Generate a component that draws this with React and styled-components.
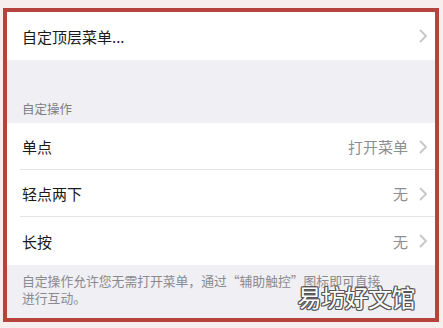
import React from "react";
import styled, { createGlobalStyle } from "styled-components";

const Global = createGlobalStyle`
  html, body { margin: 0; padding: 0; }
  body {
    background: #f7eeee;
    font-family: "Noto Sans CJK SC", "Noto Sans", sans-serif;
  }
`;

const Page = styled.div`
  width: 443px;
  height: 328px;
  box-sizing: border-box;
  padding: 8px 4px 6px 3px;
  display: flex;
`;

const Frame = styled.div`
  position: relative;
  flex: 1;
  border: 4px solid #b7433d;
  background: #efeff4;
  display: flex;
  flex-direction: column;
  overflow: hidden;
`;

const Group = styled.div`
  background: #fff;
  display: flex;
  flex-direction: column;
`;

const Row = styled.div`
  height: ${(p) => p.$h || 47}px;
  display: flex;
  align-items: center;
  padding: 0 7px 0 15px;
  position: relative;
  &::after {
    content: "";
    display: ${(p) => (p.$sep ? "block" : "none")};
    position: absolute;
    left: 13px;
    right: 0;
    bottom: 0;
    height: 1px;
    background: #e3e3e8;
  }
`;

const Label = styled.span`
  flex: 1;
  font-size: 15px;
  color: #1a1a1a;
`;

const Value = styled.span`
  font-size: 15px;
  color: #8e8e93;
  margin-right: 11px;
`;

const SectionHeader = styled.div`
  height: 63px;
  box-sizing: border-box;
  display: flex;
  align-items: flex-end;
  padding: 0 15px 6px;
  font-size: 12.5px;
  line-height: 17px;
  color: #7d7d82;
`;

const Footer = styled.div`
  padding: 7px 15px 0;
  display: flex;
  flex-direction: column;
`;

const FooterLine = styled.span`
  display: block;
  font-size: 12.8px;
  line-height: 17px;
  height: 17px;
  color: #8a8a8f;
  white-space: nowrap;
`;

const Watermark = styled.div`
  position: absolute;
  right: 20px;
  bottom: 8px;
  font-size: 24px;
  line-height: 26px;
  letter-spacing: -0.5px;
  color: #fff;
  font-family: "Noto Sans CJK SC", sans-serif;
  text-shadow: -1px -1px 0 #555, 1px -1px 0 #555, -1px 1px 0 #555,
    1px 1px 0 #555, 0 1px 0 #555, 0 -1px 0 #555, 1px 0 0 #555, -1px 0 0 #555;
`;

const Chevron = () => (
  <svg width="9" height="14" viewBox="0 0 9 14">
    <path d="M1.5 1.5 L7 7 L1.5 12.5" fill="none" stroke="#c7c7cc" strokeWidth="1.8" strokeLinecap="round" strokeLinejoin="round" />
  </svg>
);

const rows = [
  { label: "单点", value: "打开菜单" },
  { label: "轻点两下", value: "无" },
  { label: "长按", value: "无" },
];

export default function App() {
  return (
    <>
      <Global />
      <Page>
        <Frame>
          <Group>
            <Row $h={48}>
              <Label>自定顶层菜单...</Label>
              <Chevron />
            </Row>
          </Group>
          <SectionHeader>自定操作</SectionHeader>
          <Group>
            {rows.map((r, i) => (
              <Row key={r.label} $sep={i < rows.length - 1} $h={i === 2 ? 48 : 47}>
                <Label>{r.label}</Label>
                <Value>{r.value}</Value>
                <Chevron />
              </Row>
            ))}
          </Group>
          <Footer>
            <FooterLine>自定操作允许您无需打开菜单，通过“辅助触控”图标即可直接</FooterLine>
            <FooterLine>进行互动。</FooterLine>
          </Footer>
          <Watermark>易坊好文馆</Watermark>
        </Frame>
      </Page>
    </>
  );
}
